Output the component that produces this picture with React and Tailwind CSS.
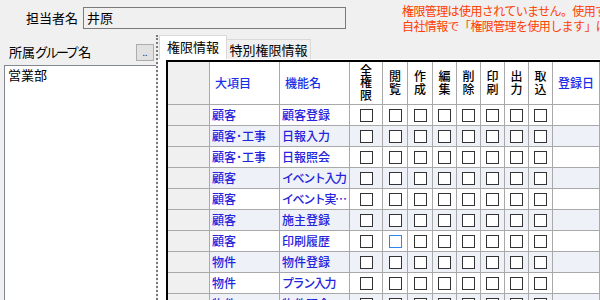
import React from "react";

const rows = [
  { major: "顧客", name: "顧客登録" },
  { major: "顧客･工事", name: "日報入力" },
  { major: "顧客･工事", name: "日報照会" },
  { major: "顧客", name: "イベント入力", tight: true },
  { major: "顧客", name: "イベント実…", tight: true },
  { major: "顧客", name: "施主登録" },
  { major: "顧客", name: "印刷履歴", focus: 1 },
  { major: "物件", name: "物件登録" },
  { major: "物件", name: "プラン入力", tight: true },
  { major: "物件", name: "物件照会" },
];

const perms = ["全権限", "閲覧", "作成", "編集", "削除", "印刷", "出力", "取込"];

const line = "border-r border-b border-[#a9a9a9]";

const Check = ({ focus }) => (
  <span
    className={`block w-[13px] h-[13px] bg-white border ${
      focus ? "border-[#2f86e8]" : "border-[#333333]"
    }`}
  />
);

const App = () => {
  return (
    <div
      className="w-[600px] h-[300px] overflow-hidden bg-[#f0f0f0] flex flex-col text-black"
      style={{ fontFamily: '"Noto Sans CJK JP", "Noto Sans", sans-serif' }}
    >
      {/* Top: person in charge + warning */}
      <div className="h-[35px] flex items-start shrink-0">
        <div className="ml-[26px] mt-[7px] h-[22px] flex items-center text-[13px] leading-[14px] w-[52px] shrink-0">
          担当者名
        </div>
        <div className="ml-[5px] mt-[7px] w-[263px] h-[22px] border border-[#7a7a7a] bg-[#f0f0f0] flex items-center pl-[3px] text-[13px] leading-[14px] shrink-0">
          井原
        </div>
        <div className="ml-[56px] mt-[3px] text-[12px] leading-[15px] text-[#ff4000] tracking-[-0.6px] whitespace-nowrap shrink-0">
          <div>権限管理は使用されていません。使用するには</div>
          <div>自社情報で「権限管理を使用します」にチェックを入れてください。</div>
        </div>
      </div>

      <div className="flex-1 flex min-h-0">
        {/* Left: group list */}
        <div className="w-[156px] flex flex-col shrink-0">
          <div className="h-[30px] flex items-start pt-[9px] shrink-0">
            <div className="ml-[9px] text-[13px] leading-[16px] whitespace-nowrap">
              所属<span className="tracking-[-2.5px]">グループ</span>
              <span className="ml-[2px]">名</span>
            </div>
            <button className="ml-auto mr-[2px] w-[18px] h-[17px] bg-[#e1e1e1] border border-[#adadad] text-[9px] leading-[8px] flex items-end justify-center pb-[3px] text-[#333]">
              ..
            </button>
          </div>
          <div className="flex-1 ml-[4px] bg-white border-l border-t border-[#828790] pl-[3px] pt-[1px] text-[13px] leading-[15px]">
            営業部
          </div>
        </div>

        {/* Splitter */}
        <div className="w-[2px] border-l-2 border-dotted border-[#7a7a7a] shrink-0" />

        {/* Right: tabs + grid */}
        <div className="flex-1 flex flex-col min-w-0">
          <div className="h-[24px] flex items-end shrink-0">
            <div className="ml-[1px] w-[68px] h-[24px] bg-white border border-b-0 border-[#d9d9d9] text-[13px] leading-[14px] flex items-center justify-center pb-[1px] whitespace-nowrap">
              権限情報
            </div>
            <div className="w-[84px] h-[20px] bg-[#f0f0f0] border border-b-0 border-l-0 border-[#d9d9d9] text-[13px] leading-[14px] flex items-center justify-center whitespace-nowrap">
              特別権限情報
            </div>
          </div>
          <div className="flex-1 bg-white pl-[8px] pt-[1px] min-h-0 overflow-hidden">
            <div className="border-t-2 border-l-2 border-black grid grid-cols-[42px_70px_70px_33px_25px_25px_24px_24px_24px_24px_24px_1fr] font-medium">
              {/* Header */}
              <div className={`h-[43px] bg-[#f0f0f0] ${line}`} />
              <div className={`h-[43px] ${line} flex items-center pl-[5px] text-[12px] text-[#1a2ee8]`}>大項目</div>
              <div className={`h-[43px] ${line} flex items-center pl-[5px] text-[12px] text-[#1a2ee8]`}>機能名</div>
              {perms.map((p) => (
                <div
                  key={p}
                  className={`h-[43px] ${line} flex flex-col items-center justify-center text-[12px] pb-[1px]`}
                >
                  {p.split("").map((c, i) => (
                    <span key={i} className="block h-[12.5px] leading-[12.5px]">
                      {c}
                    </span>
                  ))}
                </div>
              ))}
              <div className={`h-[43px] ${line} flex items-center pl-[5px] text-[12px] text-[#1a2ee8] whitespace-nowrap`}>登録日</div>

              {/* Rows */}
              {rows.map((r, ri) => {
                const bg = ri % 2 === 1 ? "bg-[#eef2f8]" : "bg-white";
                return (
                  <React.Fragment key={ri}>
                    <div className={`h-[21px] bg-[#f0f0f0] ${line}`} />
                    <div className={`h-[21px] ${bg} ${line} flex items-center pl-[2px] text-[12px] text-[#2424dc] whitespace-nowrap overflow-hidden`}>
                      {r.major}
                    </div>
                    <div
                      className={`h-[21px] ${bg} ${line} flex items-center pl-[2px] text-[12px] text-[#2424dc] whitespace-nowrap overflow-hidden ${
                        r.tight ? "tracking-[-1.4px]" : ""
                      }`}
                    >
                      {r.name}
                    </div>
                    {perms.map((p, pi) => (
                      <div key={p} className={`h-[21px] ${bg} ${line} flex items-center justify-center`}>
                        <Check focus={r.focus === pi} />
                      </div>
                    ))}
                    <div className={`h-[21px] ${bg} ${line}`} />
                  </React.Fragment>
                );
              })}
            </div>
          </div>
        </div>
      </div>
    </div>
  );
};

export default App;
